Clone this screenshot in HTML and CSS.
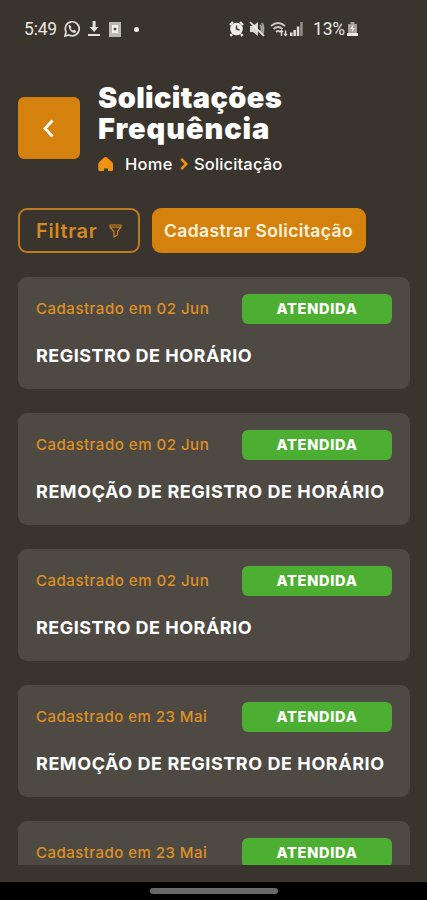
FILE: index.html
```html
<!DOCTYPE html>
<html lang="pt-BR">
<head>
<meta charset="utf-8">
<meta name="viewport" content="width=device-width, initial-scale=1">
<title>Solicitações Frequência</title>
<link rel="stylesheet" href="styles.css">
</head>
<body>
<div class="status">
  <span class="time">5:49</span>
  <svg class="whatsapp" width="18" height="18" viewBox="0 0 18 18"><path d="M2 16l1-4a7 7 0 1 1 3 3z" fill="none" stroke="#dedcd8" stroke-width="1.7"/><path d="M5.600 5.800l1.300-1 1.500 2.400-.8 1q1 1.700 2.500 2.400l1-.9 2.200 1.300q-.5 2-2.300 1.900-5-1.200-5.400-7.100z" fill="#dedcd8"/></svg>
  <svg class="download" width="12" height="16" viewBox="0 0 12 16"><path d="M4.600 0h3v6h3L6.100 11 1.600 6h3zM0 13h12v2H0z" fill="#e4e2df"/></svg>
  <svg class="doc" width="12" height="15" viewBox="0 0 12 15"><path d="M0 0h12v15H0z" fill="#b9b8b0"/><path d="M3 3h6v8H3z" fill="#f2f1ee"/><circle cx="6" cy="7" r="1.500" fill="#55524b"/></svg>
  <span class="dot"></span>
  <svg class="alarm" width="15" height="16" viewBox="0 0 15 16"><path d="M1 4l3-3M14 4l-3-3M3 13l-1.500 2M12 13l1.500 2" stroke="#e6e4e0" stroke-width="2.400"/><circle cx="7.500" cy="8" r="6.300" fill="#f0eeeb"/><path d="M7.500 4.500V8l3 1" fill="none" stroke="#39342d" stroke-width="1.400"/></svg>
  <svg class="mute" width="16" height="16" viewBox="0 0 16 16"><path d="M1 5h3l5-4v14l-5-4H1z" fill="#d9d7d3"/><path d="M11 4q3 4 0 8M13 2q3 6 0 12" fill="none" stroke="#aaa8a2" stroke-width="1.800"/><path d="M1 1l14 14" stroke="#f1efec" stroke-width="1.700"/></svg>
  <svg class="wifi" width="18" height="16" viewBox="0 0 18 16"><path d="M1 5q7-6 14 0M3.500 8q4.500-4 9 0M6 11q2-2 4 0" fill="none" stroke="#c8c6c1" stroke-width="1.800"/><path d="M11.500 15V9.500M10 11l1.500-1.500L13 11M15.500 9.500V15M14 13l1.500 1.500L17 13" fill="none" stroke="#dedcd8" stroke-width="1.400"/></svg>
  <svg class="signal" width="13" height="14" viewBox="0 0 13 14"><path d="M0 10.500h2.500V14H0zM3.400 8h2.500v6H3.400zM6.800 4.500h2.500V14H6.800z" fill="#e2e0dc"/><path d="M10.200 0h2.500v14h-2.500z" fill="#94918a"/></svg>
  <span class="percent">13%</span>
  <svg class="battery" width="11" height="14" viewBox="0 0 11 14"><path d="M3.500 0h4v2H10v9H1V2h2.500z" fill="#a4a19b"/><path d="M6.500 2L3 7h2.500L5 10l3-4H6zM0 11h11v3H0z" fill="#efedea"/></svg>
</div>
<header class="header">
  <button class="back" aria-label="Voltar"><svg width="62" height="62" viewBox="0 0 62 62"><path d="M34.500 23.500L27 31.500l7.500 8" fill="none" stroke="#fff" stroke-width="2.800"/></svg></button>
  <div class="heading">
    <h1><span class="title-a">Solicitações</span><br><span class="title-b">Frequência</span></h1>
    <nav class="crumbs">
      <svg class="house" width="15" height="15" viewBox="0 0 15 15"><path d="M6 .6q1.500-1.100 3 0L14 5q1 1 1 2v5.500q0 1.500-1.500 1.500H10v-2.500H6V14H1.800Q.3 14 .3 12.500V7q0-1 1-2z" fill="#f0930f"/></svg>
      <span class="home">Home</span>
      <svg class="chevron" width="8" height="14" viewBox="0 0 8 14"><path d="M1.200 1.800L6.300 7l-5.100 5.200" fill="none" stroke="#f0930f" stroke-width="2.500"/></svg>
      <span class="current">Solicitação</span>
    </nav>
  </div>
</header>
<div class="actions">
  <button class="filter"><span>Filtrar</span><svg width="13" height="14" viewBox="0 0 13 14"><path d="M1 1h11v2.200L8.500 7.500V11L5 13V7.500L1 3.200zM1 3.200h11" fill="none" stroke="#cd8320" stroke-width="1.200" stroke-linejoin="round"/></svg></button>
  <button class="create">Cadastrar Solicitação</button>
</div>
<main class="list">
  <article class="card"><div class="row"><span class="date jun">Cadastrado em 02 Jun</span><span class="badge">ATENDIDA</span></div><h2 class="short">REGISTRO DE HORÁRIO</h2></article>
  <article class="card"><div class="row"><span class="date jun">Cadastrado em 02 Jun</span><span class="badge">ATENDIDA</span></div><h2 class="long">REMOÇÃO DE REGISTRO DE HORÁRIO</h2></article>
  <article class="card"><div class="row"><span class="date jun">Cadastrado em 02 Jun</span><span class="badge">ATENDIDA</span></div><h2 class="short">REGISTRO DE HORÁRIO</h2></article>
  <article class="card"><div class="row"><span class="date mai">Cadastrado em 23 Mai</span><span class="badge">ATENDIDA</span></div><h2 class="long">REMOÇÃO DE REGISTRO DE HORÁRIO</h2></article>
  <article class="card"><div class="row"><span class="date mai">Cadastrado em 23 Mai</span><span class="badge">ATENDIDA</span></div></article>
</main>
<footer class="gesture"><span></span></footer>
</body>
</html>
```
FILE: styles.css
```css
* { box-sizing: border-box; }
body {
  margin: 0; height: 900px; overflow: hidden;
  display: flex; flex-direction: column;
  background: #39342d; color: #fff;
  font-family: Inter, "Open Sans", sans-serif;
}
button { border: 0; padding: 0; font: inherit; color: inherit; }
svg { display: block; flex: none; }
.status { height: 58px; flex: none; display: flex; align-items: center; padding-left: 24px; font: 17.5px/58px Roboto, sans-serif; color: #e9e7e3; white-space: nowrap; }
.time { width: 33px; letter-spacing: -0.2px; }
.whatsapp { margin-left: 6px; }
.download { margin-left: 7px; }
.doc { margin-left: 9px; }
.dot { width: 5px; height: 5px; border-radius: 50%; background: #f3f1ed; margin-left: 13px; }
.alarm { margin-left: 90px; }
.mute { margin-left: 5px; }
.wifi { margin-left: 5px; }
.signal { margin-left: 2px; }
.percent { width: 33px; margin-left: 10px; letter-spacing: -0.2px; }
.battery { margin-left: 1px; }
.header { display: flex; height: 137px; flex: none; padding: 24px 0 0 18px; }
.back { width: 62px; height: 62px; margin-top: 15px; border-radius: 6px; background: #d5810e; }
.heading { margin-left: 18px; }
h1 { margin: 0; font-size: 29px; line-height: 31px; font-weight: 900; white-space: nowrap; }
.title-a { letter-spacing: 0.35px; }
.title-b { letter-spacing: 0.9px; }
.crumbs { display: flex; align-items: center; height: 20px; margin-top: 10px; font-size: 16.5px; line-height: 20px; font-weight: 500; }
.home { margin-left: 12px; width: 48px; white-space: nowrap; letter-spacing: 0.3px; }
.chevron { margin-left: 7px; }
.current { margin-left: 6px; white-space: nowrap; letter-spacing: 0.15px; }
.actions { display: flex; gap: 11.5px; height: 45px; flex: none; margin: 13px 0 0 18px; }
.filter { width: 122px; border: 2px solid #bd7b22; border-radius: 9px; background: transparent; color: #d58920; font-size: 20px; font-weight: 600; display: flex; align-items: center; padding-left: 16px; }
.filter span { width: 62px; text-align: left; letter-spacing: 0.65px; }
.filter svg { margin-left: 11px; }
.create { width: 214px; border-radius: 9px; background: #d5810e; color: #fff3df; font-size: 17.5px; font-weight: 600; white-space: nowrap; letter-spacing: 0.36px; }
.list { height: 612px; flex: none; overflow: hidden; padding: 24px 17px 0 18px; display: flex; flex-direction: column; gap: 24px; }
.card { height: 112px; flex: none; border-radius: 9px; background: #4e4a43; padding: 17px 18px 0; }
.row { display: flex; justify-content: space-between; align-items: center; height: 30px; }
.date { color: #df9022; font-size: 15px; line-height: 20px; font-weight: 500; white-space: nowrap; }
.jun { letter-spacing: 0.52px; }
.mai { letter-spacing: 0.47px; }
.badge { width: 150px; height: 30px; border-radius: 6px; background: #4caf31; font-size: 14.5px; line-height: 29px; font-weight: 800; text-align: center; letter-spacing: 0.75px; }
h2 { margin: 20px 0 0; font-size: 18px; line-height: 24px; font-weight: 700; white-space: nowrap; }
.short { letter-spacing: 0.5px; }
.long { letter-spacing: 0.56px; }
.gesture { height: 18px; flex: none; margin-top: auto; background: #000; display: flex; justify-content: center; padding-top: 6px; }
.gesture span { width: 128px; height: 6px; border-radius: 3px; background: #686868; }
```
